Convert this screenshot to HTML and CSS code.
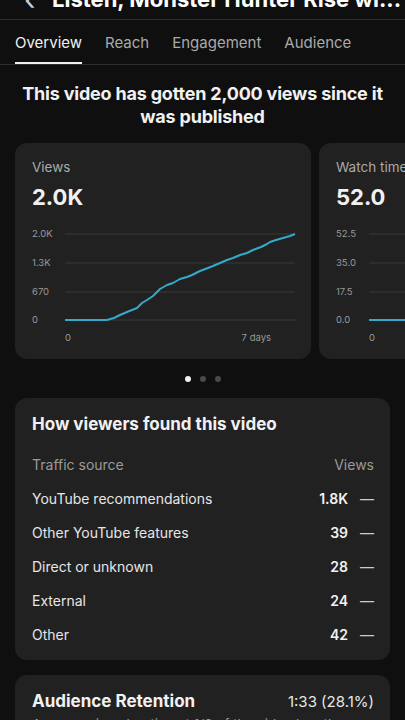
FILE: index.html
```html
<!DOCTYPE html>
<html>
<head>
    <title>Video analytics</title>
    <link rel="stylesheet" href="styles.css">
</head>
<body>
    <div class="app">
        <header class="top-bar">
            <span class="back">&#8249;</span>
            <span class="video-title">Listen, Monster Hunter Rise wi...</span>
        </header>

        <nav class="tabs">
            <span class="tab active">Overview</span>
            <span class="tab">Reach</span>
            <span class="tab">Engagement</span>
            <span class="tab">Audience</span>
        </nav>

        <h1 class="headline">This video has gotten 2,000 views since it was published</h1>

        <div class="carousel">
            <div class="stat-card">
                <div class="stat-label">Views</div>
                <div class="stat-value">2.0K</div>
                <svg class="chart" width="264" height="124" viewBox="0 0 264 124">
                    <g class="grid">
                        <line x1="33" y1="8" x2="263" y2="8"/>
                        <line x1="33" y1="37" x2="263" y2="37"/>
                        <line x1="33" y1="66" x2="263" y2="66"/>
                        <line x1="33" y1="94" x2="263" y2="94"/>
                    </g>
                    <g class="axis">
                        <text x="0" y="11">2.0K</text>
                        <text x="0" y="40">1.3K</text>
                        <text x="0" y="69">670</text>
                        <text x="0" y="97">0</text>
                        <text x="33" y="115">0</text>
                        <text x="239" y="115" text-anchor="end">7 days</text>
                    </g>
                    <polyline class="trend" points="33,94 75,94 82,92 88,89 95,86 100,84 105,82 110,77 115,74 121,70 128,63 135,59 141,57 148,53 155,51 160,49 168,45 176,42 181,40 188,37 195,34 201,32 208,29 215,27 221,24 229,21 235,18 238,16 244,14 251,12 258,10 263,8"/>
                </svg>
            </div>
            <div class="stat-card">
                <div class="stat-label">Watch time (hours)</div>
                <div class="stat-value">52.0</div>
                <svg class="chart" width="264" height="124" viewBox="0 0 264 124">
                    <g class="grid">
                        <line x1="33" y1="8" x2="263" y2="8"/>
                        <line x1="33" y1="37" x2="263" y2="37"/>
                        <line x1="33" y1="66" x2="263" y2="66"/>
                    </g>
                    <g class="axis">
                        <text x="0" y="11">52.5</text>
                        <text x="0" y="40">35.0</text>
                        <text x="0" y="69">17.5</text>
                        <text x="0" y="97">0.0</text>
                        <text x="33" y="115">0</text>
                    </g>
                    <polyline class="trend" points="33,94 90,94 140,70 263,12"/>
                </svg>
            </div>
        </div>

        <div class="dots">
            <span class="dot on"></span>
            <span class="dot"></span>
            <span class="dot"></span>
        </div>

        <section class="card">
            <h2 class="card-title">How viewers found this video</h2>
            <div class="row head">
                <span>Traffic source</span>
                <span>Views</span>
            </div>
            <div class="row">
                <span>YouTube recommendations</span>
                <span class="num">1.8K<span class="dash">&mdash;</span></span>
            </div>
            <div class="row">
                <span>Other YouTube features</span>
                <span class="num">39<span class="dash">&mdash;</span></span>
            </div>
            <div class="row">
                <span>Direct or unknown</span>
                <span class="num">28<span class="dash">&mdash;</span></span>
            </div>
            <div class="row">
                <span>External</span>
                <span class="num">24<span class="dash">&mdash;</span></span>
            </div>
            <div class="row">
                <span>Other</span>
                <span class="num">42<span class="dash">&mdash;</span></span>
            </div>
        </section>

        <section class="card retention">
            <div class="retention-head">
                <h2 class="card-title">Audience Retention</h2>
                <span class="retention-value">1:33 (28.1%)</span>
            </div>
            <p class="retention-note">Average view duration at 1/3 of the video length</p>
        </section>
    </div>
</body>
</html>
```

FILE: styles.css
```css
body {
    margin: 0;
    background: #0f0f0f;
    color: #f1f1f1;
    font-family: Inter, 'Noto Sans', sans-serif;
    overflow: hidden;
}
.app {
    width: 405px;
    height: 720px;
    overflow: hidden;
}
.top-bar {
    height: 40px;
    margin-top: -21px;
    display: flex;
    align-items: center;
    gap: 16px;
    padding: 0 0 0 24px;
    border-bottom: 1px solid #2e2e2e;
    white-space: nowrap;
    overflow: hidden;
}
.back {
    font-size: 30px;
    color: #ccc;
    width: 12px;
}
.video-title {
    font-size: 22px;
    font-weight: 700;
    color: #fff;
}
.tabs {
    display: flex;
    gap: 23px;
    padding: 0 15px;
    height: 44px;
    border-bottom: 1px solid #2e2e2e;
}
.tab {
    display: flex;
    align-items: center;
    padding-top: 2px;
    font-size: 15px;
    color: #aaa;
    border-bottom: 2px solid transparent;
}
.tab.active {
    color: #f1f1f1;
    border-bottom-color: #f1f1f1;
}
.headline {
    margin: 17px 15px 15px;
    font-size: 18px;
    line-height: 23px;
    font-weight: 700;
    text-align: center;
    letter-spacing: -0.2px;
}
.carousel {
    display: flex;
    gap: 8px;
    padding-left: 15px;
    overflow: hidden;
}
.stat-card {
    flex: 0 0 296px;
    height: 216px;
    box-sizing: border-box;
    padding: 16px 0 0 17px;
    background: #212121;
    border-radius: 12px;
}
.stat-label {
    font-size: 13.5px;
    line-height: 16px;
    color: #aaa;
    white-space: nowrap;
}
.stat-value {
    margin-top: 9px;
    font-size: 22px;
    line-height: 26px;
    font-weight: 700;
}
.chart {
    display: block;
    margin-top: 16px;
}
.grid line {
    stroke: #3a3a3a;
    stroke-width: 1;
}
.axis text {
    font-family: Inter, 'Noto Sans', sans-serif;
    font-size: 9.5px;
    fill: #9a9a9a;
}
.trend {
    fill: none;
    stroke: #35a9c9;
    stroke-width: 2;
    stroke-linejoin: round;
}
.dots {
    display: flex;
    justify-content: center;
    gap: 9px;
    height: 39px;
    align-items: center;
}
.dot {
    width: 6px;
    height: 6px;
    border-radius: 50%;
    background: #4a4a4a;
}
.dot.on {
    background: #f1f1f1;
}
.card {
    margin: 0 15px 15px;
    padding: 15px 16px 9px 17px;
    background: #212121;
    border-radius: 12px;
}
.card-title {
    margin: 0 0 12px;
    font-size: 17px;
    line-height: 22px;
    font-weight: 700;
}
.row {
    display: flex;
    justify-content: space-between;
    align-items: center;
    height: 34px;
    font-size: 14px;
    color: #e6e6e6;
}
.row.head {
    color: #9a9a9a;
}
.num {
    font-weight: 600;
    color: #f1f1f1;
}
.dash {
    margin-left: 12px;
    font-weight: 400;
    color: #ccc;
}
.retention {
    padding-top: 15px;
}
.retention-head {
    display: flex;
    justify-content: space-between;
    align-items: baseline;
}
.retention-head .card-title {
    margin: 0;
}
.retention-value {
    font-size: 15px;
    color: #e6e6e6;
}
.retention-note {
    margin: 4px 0 0;
    font-size: 13.5px;
    color: #9a9a9a;
}
```
